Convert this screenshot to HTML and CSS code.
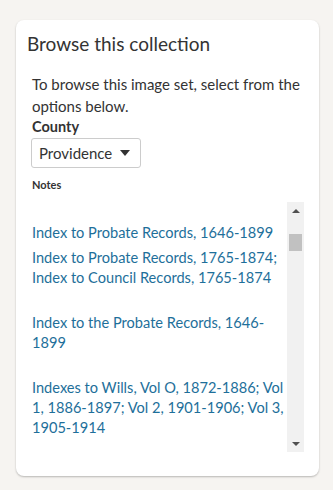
FILE: index.html
```html
<!DOCTYPE html>
<html lang="en">
<head>
<meta charset="utf-8">
<link rel="stylesheet" href="styles.css">
</head>
<body>
<div class="card">
  <h2 class="title">Browse this collection</h2>
  <div class="body">
    <p class="intro">To browse this image set, select from the options below.</p>
    <div class="label">County</div>
    <div class="select"><span>Providence</span><span class="caret"></span></div>
    <div class="notes-label">Notes</div>
    <div class="scroller">
      <div class="list">
        <a class="item first">Index to Probate Records, 1646-1899</a>
        <a class="item tight">Index to Probate Records, 1765-1874; Index to Council Records, 1765-1874</a>
        <a class="item">Index to the Probate Records, 1646-1899</a>
        <a class="item">Indexes to Wills, Vol O, 1872-1886; Vol 1, 1886-1897; Vol 2, 1901-1906; Vol 3, 1905-1914</a>
      </div>
      <div class="bar">
        <div class="arrow up"></div>
        <div class="track"><div class="thumb"></div></div>
        <div class="arrow down"></div>
      </div>
    </div>
  </div>
</div>
</body>
</html>
```

FILE: styles.css
```css
* { box-sizing: border-box; }
html, body { margin: 0; }
body {
  background: #f6f4f1;
  padding: 20px 14px 14px 16px;
  font-family: "Lato", "Noto Sans", sans-serif;
  color: #333;
}
.card {
  width: 303px;
  height: 456px;
  background: #fff;
  border-radius: 8px;
  box-shadow: 0 1px 2px rgba(0,0,0,0.25);
  padding: 12px 15px 0 11px;
}
.title {
  margin: 0;
  font-weight: 400;
  font-size: 19px;
  line-height: 24px;
  color: #333;
}
.body { padding-left: 5px; }
.intro {
  margin: 17px 0 0;
  font-size: 15px;
  line-height: 22px;
}
.label {
  font-size: 14.5px;
  font-weight: 700;
  line-height: 20px;
}
.select {
  margin-top: 1px;
  width: 110px;
  height: 30px;
  border: 1px solid #ccc;
  border-radius: 3px;
  margin-left: -1px;
  display: flex;
  align-items: center;
  justify-content: space-between;
  padding: 0 10px 0 7px;
  font-size: 15px;
}
.caret {
  width: 0; height: 0;
  border-left: 5px solid transparent;
  border-right: 5px solid transparent;
  border-top: 6px solid #333;
}
.notes-label {
  margin-top: 10px;
  font-size: 11px;
  font-weight: 700;
  line-height: 14px;
}
.scroller {
  margin-top: 10px;
  height: 250px;
  display: flex;
}
.list {
  flex: 1;
  overflow: hidden;
  padding-top: 21px;
}
.item {
  display: block;
  color: #1e6f9a;
  font-size: 14.6px;
  line-height: 20px;
  margin-top: 25px;
}
.item.first { margin-top: 0; }
.item.tight { margin-top: 5px; }
.bar {
  width: 17px;
  background: #f1f1f1;
  display: flex;
  flex-direction: column;
}
.arrow { height: 17px; display: flex; align-items: center; justify-content: center; }
.arrow::before {
  content: "";
  width: 0; height: 0;
  border-left: 4px solid transparent;
  border-right: 4px solid transparent;
}
.arrow.up::before { border-bottom: 4px solid #505050; }
.arrow.down::before { border-top: 4px solid #505050; }
.track { flex: 1; padding: 15px 2px 0; }
.thumb { height: 17px; background: #c1c1c1; }
```
